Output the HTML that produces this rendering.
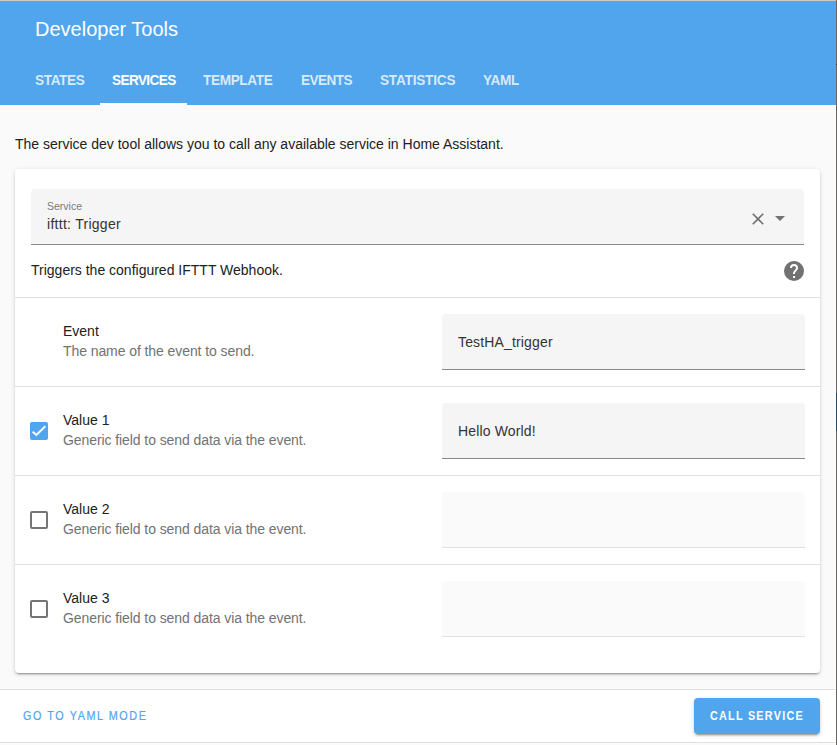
<!DOCTYPE html>
<html><head><meta charset="utf-8">
<style>
*{box-sizing:border-box;margin:0;padding:0}
html,body{width:837px;height:745px;overflow:hidden;background:#fafafa;font-family:"Liberation Sans",sans-serif;color:#212121}
.abs{position:absolute;white-space:nowrap}
#topb{position:absolute;left:0;top:0;width:837px;height:1px;background:#d0cac5}
#rightb{position:absolute;left:836px;top:0;width:1px;height:745px;background:#686462}
#whiteb{position:absolute;left:835px;top:105px;width:1px;height:640px;background:#fff}
#header{position:absolute;left:0;top:1px;width:836px;height:104px;background:#51a5ec}
.title{left:35px;top:18px;font-size:20px;color:#fff}
.tab{top:72.5px;font-size:13.6px;letter-spacing:-0.35px;transform:scaleY(1.09);transform-origin:0 12.5px;font-weight:700;color:rgba(255,255,255,0.78)}
.tab.active{color:#fff}
#uline{position:absolute;left:100px;top:103px;width:87px;height:2px;background:#fff}
.intro{left:15px;top:136px;font-size:14px}
#card{position:absolute;left:15px;top:169px;width:805px;height:504px;background:#fff;border-radius:4px;box-shadow:0 2px 2px 0 rgba(0,0,0,.14),0 1px 5px 0 rgba(0,0,0,.12),0 3px 1px -2px rgba(0,0,0,.2)}
.field{position:absolute;background:#f5f5f5;border-radius:4px 4px 0 0;border-bottom:1px solid #8a8a8a}
.field.dis{background:#fafafa;border-bottom:1px solid #e0e0e0}
.divider{position:absolute;left:15px;width:805px;height:1px;background:#e0e0e0}
.lbl{font-size:14px;color:#212121}
.desc{font-size:14px;letter-spacing:-0.08px;color:#727272}
.cb{position:absolute;width:18px;height:18px;border-radius:2px}
.cb.off{border:2px solid #757575}
.cb.on{background:#51a5ec}
#footer{position:absolute;left:0;top:689px;width:835px;height:54px;background:#fff;border-top:1px solid #e0e0e0;border-bottom:1px solid #e0e0e0}
.btn{position:absolute;left:694px;top:698px;width:126px;height:36px;background:#51a5ec;border-radius:4px;box-shadow:0 3px 1px -2px rgba(0,0,0,.2),0 2px 2px 0 rgba(0,0,0,.14),0 1px 5px 0 rgba(0,0,0,.12)}
</style></head><body>
<div id="header"></div>
<div id="topb"></div>
<div class="abs title">Developer Tools</div>
<div class="abs tab" style="left:35px">STATES</div>
<div class="abs tab active" style="left:112px;letter-spacing:-0.6px">SERVICES</div>
<div class="abs tab" style="left:203px">TEMPLATE</div>
<div class="abs tab" style="left:301px;letter-spacing:-0.55px">EVENTS</div>
<div class="abs tab" style="left:380px;letter-spacing:-0.2px">STATISTICS</div>
<div class="abs tab" style="left:483px">YAML</div>
<div id="uline"></div>

<div class="abs intro">The service dev tool allows you to call any available service in Home Assistant.</div>

<div id="card"></div>
<div class="field" style="left:31px;top:189px;width:773px;height:56px"></div>
<div class="abs" style="left:47px;top:199.5px;font-size:10.5px;color:#7a7a7a">Service</div>
<div class="abs" style="left:47px;top:216px;font-size:14px;letter-spacing:0.28px;color:#333">ifttt: Trigger</div>
<svg class="abs" style="left:748px;top:209px" width="20" height="20" viewBox="0 0 24 24"><path d="M19,6.41L17.59,5L12,10.59L6.41,5L5,6.41L10.59,12L5,17.59L6.41,19L12,13.41L17.59,19L19,17.59L13.41,12L19,6.41Z" fill="#727272"/></svg>
<svg class="abs" style="left:768px;top:206px" width="24" height="24" viewBox="0 0 24 24"><path d="M7,10L12,15L17,10H7Z" fill="#727272"/></svg>

<div class="abs lbl" style="left:31px;top:262px">Triggers the configured IFTTT Webhook.</div>
<svg class="abs" style="left:782px;top:259px" width="24" height="24" viewBox="0 0 24 24"><path d="M15.07,11.25L14.17,12.17C13.45,12.89 13,13.5 13,15H11V14.5C11,13.39 11.45,12.39 12.17,11.67L13.41,10.41C13.78,10.05 14,9.55 14,9C14,7.89 13.1,7 12,7A2,2 0 0,0 10,9H8A4,4 0 0,1 12,5A4,4 0 0,1 16,9C16,9.88 15.64,10.67 15.07,11.25M13,19H11V17H13M12,2A10,10 0 0,0 2,12A10,10 0 0,0 12,22A10,10 0 0,0 22,12C22,6.47 17.5,2 12,2Z" fill="#727272"/></svg>

<div class="divider" style="top:297px"></div>
<div class="abs lbl" style="left:63px;top:323px">Event</div>
<div class="abs desc" style="left:63px;top:343px">The name of the event to send.</div>
<div class="field" style="left:442px;top:314px;width:363px;height:56px"></div>
<div class="abs lbl" style="left:458px;top:334px;letter-spacing:0.15px;color:#333">TestHA_trigger</div>

<div class="divider" style="top:386px"></div>
<div class="cb on" style="left:30px;top:422px"><svg width="18" height="18" viewBox="0 0 18 18" style="position:absolute;left:0;top:0"><path d="M2.7 9.7L6.4 13.0L15.3 4.3" stroke="#fff" stroke-width="2" fill="none"/></svg></div>
<div class="abs lbl" style="left:63px;top:412px">Value 1</div>
<div class="abs desc" style="left:63px;top:432px">Generic field to send data via the event.</div>
<div class="field" style="left:442px;top:403px;width:363px;height:56px"></div>
<div class="abs lbl" style="left:458px;top:423px;letter-spacing:0.15px;color:#333">Hello World!</div>

<div class="divider" style="top:475px"></div>
<div class="cb off" style="left:30px;top:511px"></div>
<div class="abs lbl" style="left:63px;top:501px">Value 2</div>
<div class="abs desc" style="left:63px;top:521px">Generic field to send data via the event.</div>
<div class="field dis" style="left:442px;top:492px;width:363px;height:56px"></div>

<div class="divider" style="top:564px"></div>
<div class="cb off" style="left:30px;top:600px"></div>
<div class="abs lbl" style="left:63px;top:590px">Value 3</div>
<div class="abs desc" style="left:63px;top:610px">Generic field to send data via the event.</div>
<div class="field dis" style="left:442px;top:581px;width:363px;height:56px"></div>

<div id="footer"></div>
<div class="abs" style="left:23px;top:709px;font-size:12px;letter-spacing:1.75px;transform:scaleX(0.9);transform-origin:0 0;-webkit-text-stroke:0.2px #51a5ec;color:#51a5ec">GO TO YAML MODE</div>
<div class="btn"></div>
<div class="abs" style="left:710px;top:709px;font-size:12px;font-weight:700;letter-spacing:1.4px;transform:scaleX(0.9);transform-origin:0 0;color:#fff">CALL SERVICE</div>
<div id="whiteb"></div><div id="rightb"></div>
<div style="position:absolute;left:836px;top:393px;width:1px;height:38px;background:#22486a"></div>
<div style="position:absolute;left:836px;top:64px;width:1px;height:1px;background:#3a3634"></div>
</body></html>
